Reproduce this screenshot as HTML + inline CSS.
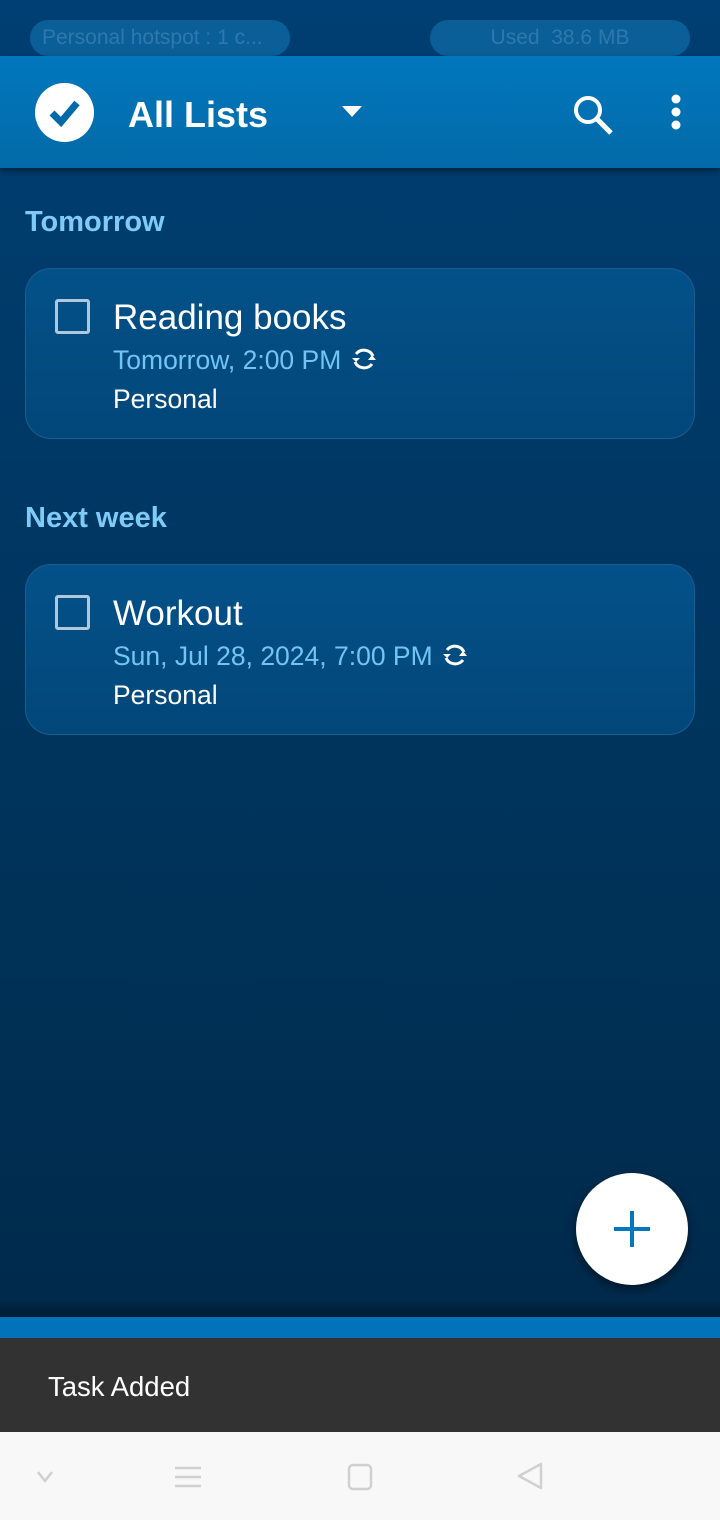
<!DOCTYPE html>
<html><head><meta charset="utf-8"><style>
*{margin:0;padding:0;box-sizing:border-box}
body{width:720px;height:1520px;overflow:hidden;font-family:"Liberation Sans",sans-serif;background:linear-gradient(#003f73,#003258 60%,#002a4c 1300px);position:relative}
.pill{position:absolute;top:20px;height:36px;border-radius:18px;background:#0a5f98;color:#2f78ad;font-size:21px;line-height:36px}
.bar{position:absolute;top:56px;left:0;width:720px;height:112px;background:linear-gradient(#0277bd,#026aa8);box-shadow:0 3px 6px rgba(0,0,0,.45)}
.h{position:absolute;left:25px;color:#7fcbf8;font-weight:bold;font-size:29px}
.card{position:absolute;left:25px;width:670px;height:171px;border-radius:26px;background:linear-gradient(#035189,#034779);border:1.5px solid #1b5d8f}
.cb{position:absolute;left:29px;top:30px;width:35px;height:35px;border:3px solid #b0c8dc;border-radius:3px}
.t{position:absolute;left:87px;top:29px;color:#fff;font-size:35px}
.d{position:absolute;left:87px;top:76px;color:#72c4f5;font-size:26.5px;white-space:nowrap}
.p{position:absolute;left:87px;top:115px;color:#fff;font-size:26.5px}
</style></head><body>
<div class="pill" style="left:30px;width:260px;padding-left:12px">Personal hotspot : 1 c...</div>
<div class="pill" style="left:430px;width:260px;text-align:center">Used&nbsp; 38.6 MB</div>
<div class="bar">
<div style="position:absolute;left:35px;top:27px;width:59px;height:59px;border-radius:50%;background:#fff"></div>
<svg style="position:absolute;left:35px;top:27px" width="59" height="59" viewBox="0 0 59 59"><path d="M17 30 L26 39 L42 20" stroke="#026aa8" stroke-width="7" fill="none"/></svg>
<div style="position:absolute;left:128px;top:38px;color:#fff;font-weight:bold;font-size:36px">All Lists</div>
<svg style="position:absolute;left:342px;top:50px" width="20" height="12"><path d="M0 0H20L10 11Z" fill="#fff"/></svg>
<svg style="position:absolute;left:570px;top:36px" width="46" height="46"><circle cx="18" cy="18" r="12" stroke="#fff" stroke-width="4" fill="none"/><path d="M27 27L41 41" stroke="#fff" stroke-width="5"/></svg>
<svg style="position:absolute;left:668px;top:38px" width="16" height="40"><circle cx="8" cy="5" r="4.5" fill="#fff"/><circle cx="8" cy="18" r="4.5" fill="#fff"/><circle cx="8" cy="31" r="4.5" fill="#fff"/></svg>
</div>
<div class="h" style="top:206px">Tomorrow</div>
<div class="card" style="top:268px"><div class="cb"></div><div class="t">Reading books</div><div class="d">Tomorrow, 2:00 PM <svg width="30" height="26" viewBox="0 0 30 26" style="vertical-align:-3px"><path d="M24 10 A10 10 0 0 0 7 8" stroke="#fff" stroke-width="3" fill="none"/><path d="M3 12H11L7 16Z" fill="#fff"/><path d="M6 16 A10 10 0 0 0 23 18" stroke="#fff" stroke-width="3" fill="none"/><path d="M19 14H27L23 9Z" fill="#fff"/></svg></div><div class="p">Personal</div></div>
<div class="h" style="top:502px">Next week</div>
<div class="card" style="top:564px"><div class="cb"></div><div class="t">Workout</div><div class="d">Sun, Jul 28, 2024, 7:00 PM <svg width="30" height="26" viewBox="0 0 30 26" style="vertical-align:-3px"><path d="M24 10 A10 10 0 0 0 7 8" stroke="#fff" stroke-width="3" fill="none"/><path d="M3 12H11L7 16Z" fill="#fff"/><path d="M6 16 A10 10 0 0 0 23 18" stroke="#fff" stroke-width="3" fill="none"/><path d="M19 14H27L23 9Z" fill="#fff"/></svg></div><div class="p">Personal</div></div>
<div style="position:absolute;left:576px;top:1173px;width:112px;height:112px;border-radius:50%;background:#fff;box-shadow:0 4px 10px rgba(0,0,0,.5)"></div>
<svg style="position:absolute;left:612px;top:1209px" width="40" height="40"><path d="M20 2V38M2 20H38" stroke="#0277bd" stroke-width="4"/></svg>
<div style="position:absolute;left:0;top:1300px;width:720px;height:17px;background:linear-gradient(rgba(0,0,0,0),rgba(0,0,0,.35))"></div>
<div style="position:absolute;left:0;top:1317px;width:720px;height:21px;background:#0273ba"></div>
<div style="position:absolute;left:0;top:1338px;width:720px;height:94px;background:#323232;color:#fff;font-size:27.5px;padding:33px 0 0 48px">Task Added</div>
<div style="position:absolute;left:0;top:1432px;width:720px;height:88px;background:#f8f8f8"></div>
<svg style="position:absolute;left:0;top:1432px" width="720" height="88"><g stroke="#d0d0d0" stroke-width="2.5" fill="none"><path d="M38 40L45 49L52 40"/><path d="M175 36H201M175 45H201M175 54H201"/><rect x="349" y="33" width="22" height="24" rx="4"/><path d="M541 32V56L519 44Z" stroke-linejoin="round"/></g></svg>
</body></html>
